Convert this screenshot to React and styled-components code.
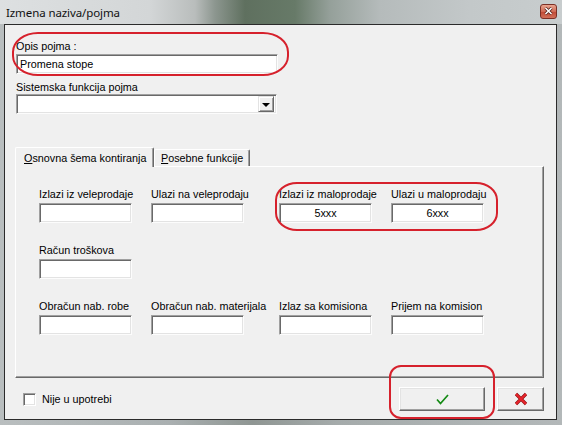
import React from "react";
import styled, { createGlobalStyle } from "styled-components";

const GlobalStyle = createGlobalStyle`
  html, body {
    margin: 0;
    padding: 0;
    background: #a4aaab;
  }
  body {
    font-family: "Liberation Sans", Arial, sans-serif;
    font-size: 10.8px;
    color: #000;
  }
`;

const Frame = styled.div`
  position: relative;
  width: 562px;
  height: 425px;
  display: flex;
  flex-direction: column;
  background: linear-gradient(
    90deg,
    #b9bebf 0%,
    #aab0b1 30%,
    #8f9693 45%,
    #a5abab 60%,
    #b3b8b9 100%
  );
  overflow: hidden;
`;

const TitleBar = styled.div`
  height: 24px;
  flex: none;
  display: flex;
  align-items: center;
  justify-content: space-between;
  padding: 0 5px 0 6px;
  background: linear-gradient(
    90deg,
    #dde0e1 0px,
    #d3d6d7 150px,
    #b9bdbc 195px,
    #8c968f 215px,
    #5f705f 245px,
    #677a68 295px,
    #95a09a 330px,
    #b5bbbb 380px,
    #c3c8c9 470px,
    #c8cdce 562px
  );
`;

const Title = styled.span`
  font-family: "Noto Sans", "Open Sans", sans-serif;
  font-size: 11.5px;
  color: #111;
  letter-spacing: -0.1px;
`;

const CloseButton = styled.div`
  width: 17px;
  height: 15px;
  margin-top: -2px;
  box-sizing: border-box;
  border: 1px solid #7b2f25;
  border-radius: 3px;
  background: linear-gradient(#e9a48f, #d06a55 50%, #bf4733 51%, #d2705a);
  display: flex;
  align-items: center;
  justify-content: center;
`;

const Client = styled.div`
  flex: 1;
  margin: 0 5px 5px 4px;
  border: 1px solid #2b2b2b;
  background: #f0f0f0;
  display: flex;
  flex-direction: column;
`;

const TopSection = styled.div`
  padding: 15px 0 0 11px;
  width: 262px;
  display: flex;
  flex-direction: column;
`;

const Label = styled.div`
  line-height: ${(p) => (p.$tall ? "14px" : "13px")};
  white-space: nowrap;
`;

const Sunken = styled.div`
  box-sizing: border-box;
  height: 20px;
  width: ${(p) => p.$width || "100%"};
  margin-top: ${(p) => p.$gap || "0px"};
  background: #fff;
  border-style: solid;
  border-width: 1px;
  border-color: #a0a0a0 #fcfcfc #fcfcfc #a0a0a0;
  box-shadow: inset 1px 1px 0 #696969, inset -1px -1px 0 #e3e3e3;
  display: flex;
  align-items: center;
  justify-content: ${(p) => (p.$center ? "center" : "flex-start")};
  padding: 0 3px;
  white-space: nowrap;
`;

const Spacer = styled.div`
  height: ${(p) => p.$h}px;
  flex: none;
`;

const Combo = styled(Sunken)`
  justify-content: flex-end;
  padding: 0 2px 0 3px;
`;

const DropButton = styled.div`
  box-sizing: border-box;
  width: 16px;
  height: 16px;
  background: #f0f0f0;
  border-style: solid;
  border-width: 1px;
  border-color: #e3e3e3 #696969 #696969 #e3e3e3;
  box-shadow: inset 1px 1px 0 #fff, inset -1px -1px 0 #a0a0a0;
  display: flex;
  align-items: center;
  justify-content: center;

  &::after {
    content: "";
    border-left: 4px solid transparent;
    border-right: 4px solid transparent;
    border-top: 4px solid #000;
    margin-top: 1px;
  }
`;

const TabStrip = styled.div`
  margin: 33px 0 0 10px;
  height: 19px;
  display: flex;
  align-items: flex-end;
  position: relative;
  z-index: 1;
`;

const Tab = styled.div`
  box-sizing: border-box;
  width: ${(p) => p.$width}px;
  height: ${(p) => (p.$active ? "20px" : "17px")};
  margin-bottom: ${(p) => (p.$active ? "-1px" : "0")};
  padding: ${(p) => (p.$active ? "1px 0 0 8px" : "0 0 0 6px")};
  background: #f0f0f0;
  border-style: solid;
  border-width: 1px 1px 0 1px;
  border-color: #fff #696969 #fff #fff;
  box-shadow: inset -1px 0 0 #a0a0a0;
  border-radius: 2px 2px 0 0;
  display: flex;
  align-items: center;
  line-height: 14px;
  white-space: nowrap;
  overflow: hidden;

  u {
    text-decoration: underline;
    text-underline-offset: 1px;
  }
`;

const Panel = styled.div`
  box-sizing: border-box;
  height: 212px;
  margin: 0 12px 0 10px;
  border-style: solid;
  border-width: 1px;
  border-color: #fff #696969 #696969 #fff;
  box-shadow: inset -1px -1px 0 #a0a0a0;
  padding: 20px 0 0 23px;
`;

const FieldGrid = styled.div`
  display: grid;
  grid-template-columns: 112px 128px 112px 93px;
  row-gap: 20px;
`;

const Field = styled.div`
  display: flex;
  flex-direction: column;
  gap: 2px;
  grid-column: ${(p) => (p.$rowStart ? "1" : "auto")};
`;

const BottomRow = styled.div`
  margin-top: 9px;
  height: 24px;
  padding: 0 12px 0 18px;
  display: flex;
  align-items: center;
`;

const CheckBox = styled.div`
  box-sizing: border-box;
  width: 13px;
  height: 13px;
  margin-top: 1px;
  background: #fff;
  border-style: solid;
  border-width: 1px;
  border-color: #a0a0a0 #fff #fff #a0a0a0;
  box-shadow: inset 1px 1px 0 #696969, inset -1px -1px 0 #e3e3e3;
`;

const CheckLabel = styled.span`
  margin-left: 6px;
  flex: 1;
`;

const Button = styled.div`
  box-sizing: border-box;
  width: ${(p) => p.$width}px;
  height: 24px;
  margin-left: ${(p) => p.$gap || 0}px;
  background: #f0f0f0;
  border-style: solid;
  border-width: 1px;
  border-color: #fff #696969 #696969 #fff;
  box-shadow: inset -1px -1px 0 #a0a0a0, inset 1px 1px 0 #e3e3e3;
  display: flex;
  align-items: center;
  justify-content: center;
`;

const Annotation = styled.div`
  position: absolute;
  left: ${(p) => p.$x}px;
  top: ${(p) => p.$y}px;
  width: ${(p) => p.$w}px;
  height: ${(p) => p.$h}px;
  box-sizing: border-box;
  border: 2.5px solid #d6212c;
  border-radius: ${(p) => p.$r};
  pointer-events: none;
`;

const rows = [
  ["Izlazi iz veleprodaje", ""],
  ["Ulazi na veleprodaju", ""],
  ["Izlazi iz maloprodaje", "5xxx"],
  ["Ulazi u maloprodaju", "6xxx"],
  ["Račun troškova", "", true],
  ["Obračun nab. robe", "", true],
  ["Obračun nab. materijala", ""],
  ["Izlaz sa komisiona", ""],
  ["Prijem na komision", ""],
];

const CloseGlyph = () => (
  <svg width="9" height="8" viewBox="0 0 9 8">
    <path d="M1.5 1 L7.5 7 M7.5 1 L1.5 7" stroke="#4a1a14" strokeWidth="3" />
    <path d="M1.5 1 L7.5 7 M7.5 1 L1.5 7" stroke="#fff" strokeWidth="1.6" />
  </svg>
);

const OkGlyph = () => (
  <svg width="13" height="11" viewBox="0 0 13 11">
    <path d="M1 5.5 L4.5 9.5 L12 1" fill="none" stroke="#138a13" strokeWidth="1.7" />
  </svg>
);

const CancelGlyph = () => (
  <svg width="14" height="14" viewBox="0 0 14 14">
    <path d="M2 2 L12 12 M12 2 L2 12" stroke="#8c1010" strokeWidth="3.2" />
    <path d="M2 2 L12 12 M12 2 L2 12" stroke="#e8242c" strokeWidth="2" />
  </svg>
);

const App = () => {
  return (
    <>
      <GlobalStyle />
      <Frame>
        <TitleBar>
          <Title>Izmena naziva/pojma</Title>
          <CloseButton>
            <CloseGlyph />
          </CloseButton>
        </TitleBar>

        <Client>
          <TopSection>
            <Label>Opis pojma :</Label>
            <Sunken $gap="1px">Promena stope</Sunken>
            <Spacer $h={7} />
            <Label>Sistemska funkcija pojma</Label>
            <Combo $width="261px">
              <DropButton />
            </Combo>
          </TopSection>

          <TabStrip>
            <Tab $active $width={139}>
              <span>
                <u>O</u>snovna šema kontiranja
              </span>
            </Tab>
            <Tab $width={96}>
              <span>
                <u>P</u>osebne funkcije
              </span>
            </Tab>
          </TabStrip>

          <Panel>
            <FieldGrid>
              {rows.map(([label, value, rowStart]) => (
                <Field key={label} $rowStart={rowStart}>
                  <Label $tall>{label}</Label>
                  <Sunken $width="93px" $center>
                    {value}
                  </Sunken>
                </Field>
              ))}
            </FieldGrid>
          </Panel>

          <BottomRow>
            <CheckBox />
            <CheckLabel>Nije u upotrebi</CheckLabel>
            <Button $width={86}>
              <OkGlyph />
            </Button>
            <Button $width={47} $gap={12}>
              <CancelGlyph />
            </Button>
          </BottomRow>
        </Client>

        <Annotation $x={12} $y={32} $w={277} $h={44} $r="26px / 20px" />
        <Annotation $x={275} $y={182} $w={223} $h={49} $r="22px / 18px" />
        <Annotation $x={389} $y={365} $w={106} $h={54} $r="12px" />
      </Frame>
    </>
  );
};

export default App;
